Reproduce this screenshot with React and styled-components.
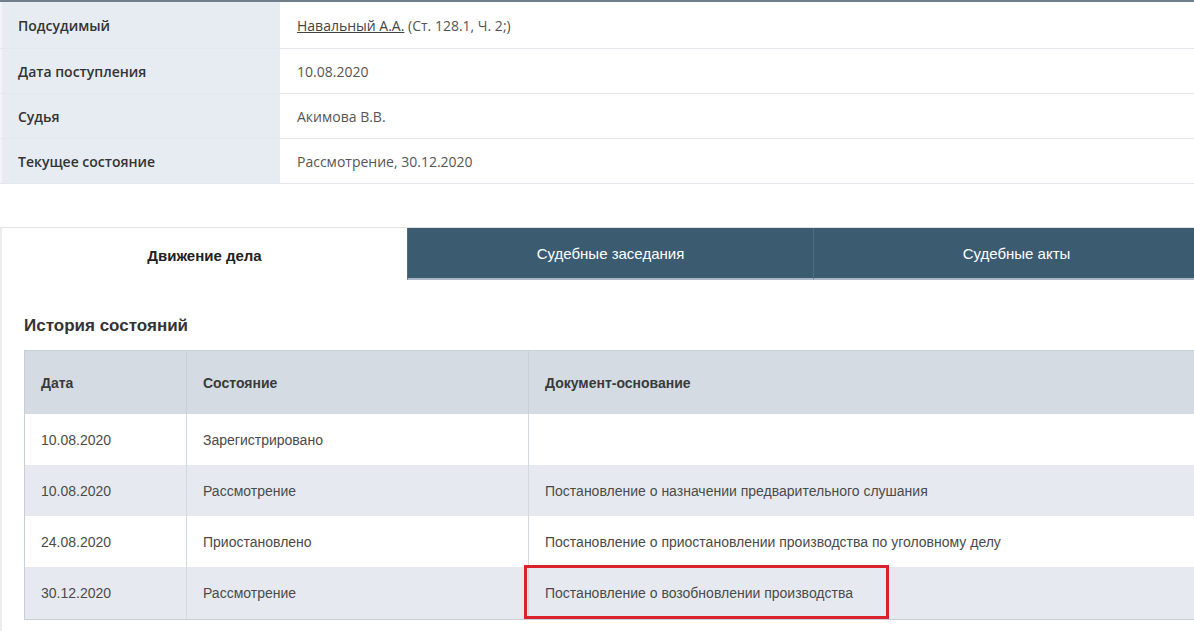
import React from 'react';
import styled, { createGlobalStyle } from 'styled-components';

const GlobalStyle = createGlobalStyle`
  body {
    margin: 0;
    background: #fff;
    font-family: "Liberation Sans", Arial, sans-serif;
    overflow: hidden;
  }
`;

const caseInfo = [
  { label: 'Подсудимый', value: 'Навальный А.А.', extra: ' (Ст. 128.1, Ч. 2;)', link: true },
  { label: 'Дата поступления', value: '10.08.2020' },
  { label: 'Судья', value: 'Акимова В.В.' },
  { label: 'Текущее состояние', value: 'Рассмотрение, 30.12.2020' },
];

const tabs = ['Движение дела', 'Судебные заседания', 'Судебные акты'];

const history = [
  { date: '10.08.2020', state: 'Зарегистрировано', doc: '' },
  { date: '10.08.2020', state: 'Рассмотрение', doc: 'Постановление о назначении предварительного слушания' },
  { date: '24.08.2020', state: 'Приостановлено', doc: 'Постановление о приостановлении производства по уголовному делу' },
  { date: '30.12.2020', state: 'Рассмотрение', doc: 'Постановление о возобновлении производства', marked: true },
];

const App = () => {
  return (
    <Page>
      <GlobalStyle />
      <InfoTable>
        {caseInfo.map((row) => (
          <InfoRow key={row.label}>
            <InfoLabel>{row.label}</InfoLabel>
            <InfoValue>
              {row.link ? <PersonLink>{row.value}</PersonLink> : row.value}
              {row.extra}
            </InfoValue>
          </InfoRow>
        ))}
      </InfoTable>

      <TabsPanel>
        <TabBar>
          {tabs.map((tab, i) => (
            <Tab key={tab} active={i === 0}>{tab}</Tab>
          ))}
        </TabBar>

        <TabContent>
          <SectionTitle>История состояний</SectionTitle>
          <HistoryTable>
            <HeadRow>
              <HeadCell>Дата</HeadCell>
              <HeadCell>Состояние</HeadCell>
              <HeadCell>Документ-основание</HeadCell>
            </HeadRow>
            {history.map((row, i) => (
              <BodyRow key={i} striped={i % 2 === 1}>
                <Cell>{row.date}</Cell>
                <Cell>{row.state}</Cell>
                <Cell>
                  {row.doc}
                  {row.marked && <Highlight />}
                </Cell>
              </BodyRow>
            ))}
          </HistoryTable>
        </TabContent>
      </TabsPanel>
    </Page>
  );
};

const Page = styled.div`
  width: 1194px;
  height: 631px;
  overflow: hidden;
`;

const InfoTable = styled.div`
  display: flex;
  flex-direction: column;
  border-top: 2px solid #6f7f8c;
  font-family: "Open Sans", "Liberation Sans", sans-serif;
  font-size: 14px;
`;

const InfoRow = styled.div`
  display: grid;
  grid-template-columns: 280px 1fr;
  height: 44px;
  border-bottom: 1px solid #e4e8ec;
  &:first-child {
    height: 46px;
  }
`;

const InfoLabel = styled.div`
  display: flex;
  align-items: center;
  padding-left: 16px;
  background: #e7ecf2;
  color: #333;
  font-weight: 600;
  border-left: 2px solid #f2f4f7;
`;

const InfoValue = styled.div`
  display: flex;
  align-items: center;
  padding-left: 17px;
  color: #555;
  white-space: pre;
`;

const PersonLink = styled.span`
  color: #444;
  text-decoration: underline;
`;

const TabsPanel = styled.div`
  margin-top: 43px;
  border-top: 1px solid #e2e2e2;
  border-left: 2px solid #ececec;
  height: 420px;
`;

const TabBar = styled.div`
  display: grid;
  grid-template-columns: 405px 406px 406px;
  height: 52px;
`;

const Tab = styled.div`
  display: flex;
  align-items: center;
  justify-content: center;
  font-size: 15px;
  color: ${(p) => (p.active ? '#222' : '#fff')};
  font-weight: ${(p) => (p.active ? 'bold' : 'normal')};
  background: ${(p) => (p.active ? '#fff' : '#3b5b71')};
  border-bottom: ${(p) => (p.active ? 'none' : '2px solid #a9b8c4')};
  border-left: ${(p) => (p.active ? 'none' : '1px solid #4e6d83')};
  padding-top: ${(p) => (p.active ? '2px' : '0')};
`;

const TabContent = styled.div`
  padding: 35px 0 0 22px;
`;

const SectionTitle = styled.h3`
  margin: 0 0 13px;
  font-size: 17px;
  font-weight: bold;
  color: #333;
  line-height: 22px;
`;

const HistoryTable = styled.div`
  width: 1200px;
  border: 1px solid #c6ced6;
  border-right: none;
  font-size: 14px;
  color: #4a4a4a;
`;

const HeadRow = styled.div`
  display: grid;
  grid-template-columns: 161px 342px 1fr;
  height: 63px;
  background: #d4dbe2;
  font-weight: bold;
  color: #3a3a3a;
`;

const HeadCell = styled.div`
  display: flex;
  align-items: center;
  padding-left: 16px;
  & + & {
    border-left: 1px solid #c9d0d7;
  }
`;

const BodyRow = styled.div`
  display: grid;
  grid-template-columns: 161px 342px 1fr;
  height: 51px;
  background: ${(p) => (p.striped ? '#e6eaf0' : '#fff')};
  &:last-child {
    height: 52px;
  }
`;

const Cell = styled.div`
  position: relative;
  display: flex;
  align-items: center;
  padding-left: 16px;
  & + & {
    border-left: 1px solid #d3d9df;
  }
`;

const Highlight = styled.span`
  position: absolute;
  left: -5px;
  top: -2px;
  width: 359px;
  height: 48px;
  border: 3px solid #d9222c;
`;

export default App;
